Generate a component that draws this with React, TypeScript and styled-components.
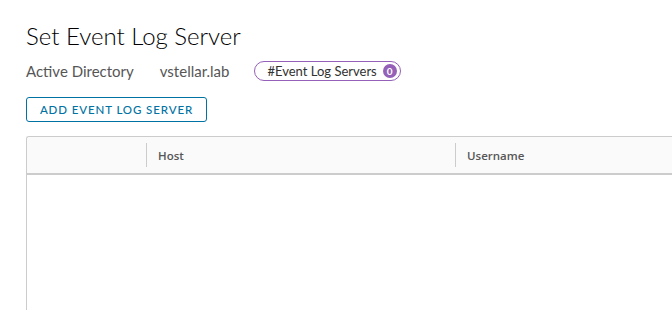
import React from "react";
import styled, { createGlobalStyle } from "styled-components";

const Global = createGlobalStyle`
  html, body { margin: 0; padding: 0; background: #fff; }
  body { font-family: Lato, "Open Sans", sans-serif; overflow: hidden; }
`;

const Page = styled.div`
  width: 672px;
  height: 310px;
  padding: 21px 0 0 26px;
  box-sizing: border-box;
  overflow: hidden;
`;

const Title = styled.h1`
  margin: 0;
  font-family: Lato, sans-serif;
  font-weight: 300;
  font-size: 24px;
  line-height: 29px;
  color: #000;
`;

const MetaRow = styled.div`
  display: flex;
  align-items: center;
  margin-top: 11px;
  height: 20px;
`;

const MetaText = styled.span<{ $gap?: number }>`
  font-size: 15px;
  color: #565656;
  margin-right: ${(p) => p.$gap ?? 0}px;
`;

const Badge = styled.span`
  display: inline-flex;
  align-items: center;
  height: 20px;
  box-sizing: border-box;
  border: 1px solid #9460b8;
  border-radius: 10px;
  padding: 0 3px 0 12px;
  font-size: 13px;
  font-weight: 400;
  color: #313131;
`;

const Count = styled.span`
  display: inline-flex;
  align-items: center;
  justify-content: center;
  width: 14px;
  height: 14px;
  border-radius: 50%;
  background: #9460b8;
  color: #fff;
  font-size: 10px;
  font-weight: 700;
  margin-left: 6px;
`;

const Button = styled.button`
  margin-top: 16px;
  height: 25px;
  width: 181px;
  box-sizing: border-box;
  border: 1px solid #0072a3;
  border-radius: 3px;
  background: #fff;
  color: #0072a3;
  font-family: Lato, sans-serif;
  font-size: 11.5px;
  font-weight: 500;
  letter-spacing: 0.9px;
  padding: 0;
  display: flex;
  align-items: center;
  justify-content: center;
`;

const Grid = styled.div`
  margin-top: 14px;
  width: 680px;
  height: 200px;
  border: 1px solid #ccc;
  border-right: none;
  border-radius: 3px 0 0 0;
  box-sizing: border-box;
`;

const HeaderRow = styled.div`
  display: grid;
  grid-template-columns: 119px 309px 1fr;
  height: 38px;
  background: #fafafa;
  border-bottom: 2px solid #ccc;
  box-sizing: border-box;
  border-radius: 3px 0 0 0;
`;

const HeaderCell = styled.div<{ $sep?: boolean }>`
  display: flex;
  align-items: center;
  padding-left: 11px;
  font-family: "Open Sans", sans-serif;
  font-size: 11.5px;
  font-weight: 600;
  color: #565656;
  border-left: ${(p) => (p.$sep ? "1px solid #ccc" : "none")};
  margin: ${(p) => (p.$sep ? "6px 0" : "0")};
`;

export default function App() {
  return (
    <Page>
      <Global />
      <Title>Set Event Log Server</Title>
      <MetaRow>
        <MetaText $gap={26}>Active Directory</MetaText>
        <MetaText $gap={25}>vstellar.lab</MetaText>
        <Badge>
          #Event Log Servers
          <Count>0</Count>
        </Badge>
      </MetaRow>
      <Button>ADD EVENT LOG SERVER</Button>
      <Grid>
        <HeaderRow>
          <HeaderCell />
          <HeaderCell $sep>Host</HeaderCell>
          <HeaderCell $sep>Username</HeaderCell>
        </HeaderRow>
      </Grid>
    </Page>
  );
}
